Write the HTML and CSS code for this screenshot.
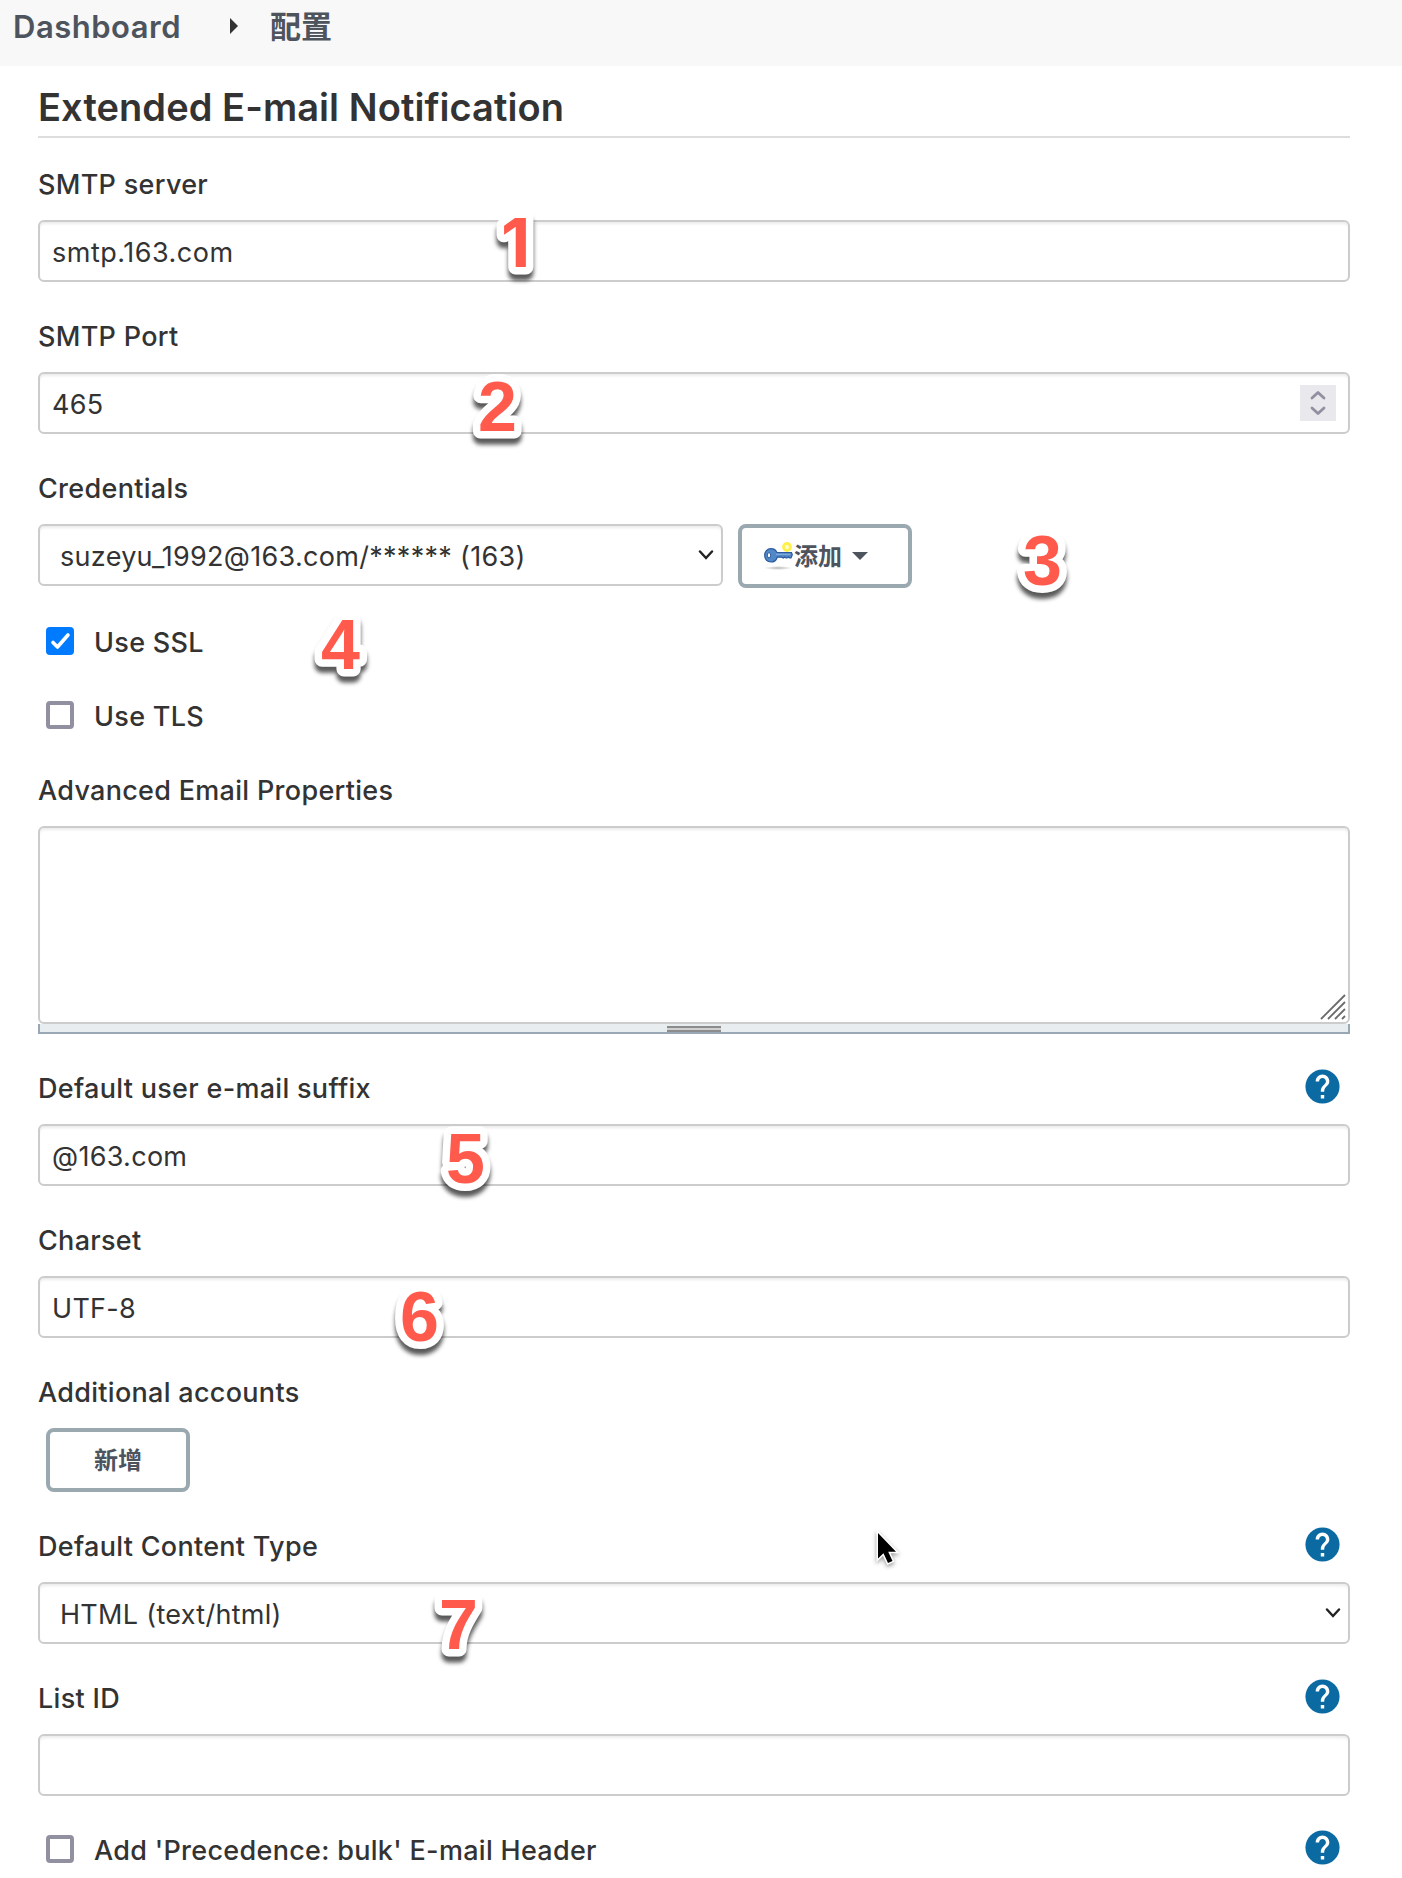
FILE: index.html
```html
<!DOCTYPE html>
<html lang="zh-CN">
<head>
<meta charset="utf-8">
<title>配置</title>
<link rel="stylesheet" href="styles.css">
</head>
<body>
<svg class="defs" width="0" height="0">
  <symbol id="help" viewBox="0 0 24 24"><path fill="#0b6aa2" d="M12 2C6.480 2 2 6.480 2 12s4.480 10 10 10 10-4.480 10-10S17.520 2 12 2z"/><path fill="#fff" d="M13 19h-2v-2h2v2zm2.070-7.750l-.9.920C13.450 12.900 13 13.500 13 15h-2v-.5c0-1.100.45-2.100 1.170-2.830l1.240-1.260c.37-.36.59-.86.59-1.410 0-1.100-.9-2-2-2s-2 .9-2 2H8c0-2.210 1.790-4 4-4s4 1.790 4 4c0 .88-.36 1.680-.93 2.250z"/></symbol>
  <symbol id="chevron" viewBox="0 0 16 10"><path d="M2 1.500 8 8l6-6.500" fill="none" stroke="#222" stroke-width="2.400" stroke-linecap="round"/></symbol>
</svg>
<header class="breadcrumbs">
  <a class="crumb crumb-home">Dashboard</a>
  <svg class="crumb-arrow" width="8" height="16" viewBox="0 0 8 16"><path d="M0 0l8 8-8 8z" fill="#333"/></svg>
  <a class="crumb">配置</a>
</header>
<main class="form">
  <h1 class="title">Extended E-mail Notification</h1>

  <section class="field">
    <div class="label"><span>SMTP server</span></div>
    <div class="control"><span class="host">smtp.163.com</span></div>
  </section>

  <section class="field">
    <div class="label"><span>SMTP Port</span></div>
    <div class="control"><span>465</span>
      <svg class="spinner" width="36" height="36" viewBox="0 0 36 36"><path fill="#e8e8ed" d="M0 0h36v36H0z"/><path d="M12 13l6-5.500 6 5.500M12 23l6 5.500 6-5.500" fill="none" stroke="#9190a0" stroke-width="2.800" stroke-linecap="round" stroke-linejoin="round"/></svg>
    </div>
  </section>

  <section class="field">
    <div class="label"><span>Credentials</span></div>
    <div class="credentials">
      <div class="control select"><span>suzeyu_1992@163.com/****** (163)</span><svg class="chevron" width="16" height="10"><use href="#chevron"/></svg></div>
      <button class="button button-add">
        <svg class="key" width="32" height="32" viewBox="0 0 32 32">
          <defs><radialGradient id="shade"><stop offset="0" stop-color="#000" stop-opacity=".28"/><stop offset="1" stop-color="#000" stop-opacity="0"/></radialGradient></defs>
          <ellipse cx="16" cy="28" rx="14" ry="2" fill="url(#shade)"/>
          <circle cx="25" cy="7" r="3.400" fill="#fffde0" stroke="#fff04a" stroke-width="3"/>
          <path d="M9 8.700c3 0 5 1.500 6 4h14.500l.8 2-1.300 3.300h-1.500l-1-1-1.500 1h-1l-1.200-1-1.500 1-1.500-.8H15.300c-1 3-3.300 4.800-6.300 4.800-4 0-6.300-3-6.300-6.600S5 8.700 9 8.700z" fill="#5288c8" stroke="#2b5b9e" stroke-width="1.200"/>
          <path d="M14 14.200h14.500" stroke="#93b9e6" stroke-width="1"/>
          <ellipse cx="7" cy="15.300" rx="1.600" ry="2.700" fill="#fff" stroke="#2b5b9e"/>
        </svg><span>添加</span>
        <svg class="caret" width="16" height="8" viewBox="0 0 16 8"><path d="M0 0h16L8 8z" fill="#4d545d"/></svg>
      </button>
    </div>
  </section>

  <section class="check"><span class="box checked"><svg width="28" height="28" viewBox="0 0 28 28"><path d="M7 15.500l4.500 4.500L22 8" fill="none" stroke="#fff" stroke-width="3.600" stroke-linecap="round" stroke-linejoin="round"/></svg></span><span>Use SSL</span></section>
  <section class="check"><span class="box"></span><span>Use TLS</span></section>

  <section class="field">
    <div class="label"><span>Advanced Email Properties</span></div>
    <div class="control area"><svg width="26" height="26" viewBox="0 0 26 26"><path d="M1 25 25 1M8 25 25 8M15 25l10-10M22 25l3-3" stroke="#6b6b6b" stroke-width="1.800" fill="none"/></svg></div>
    <div class="handle"><span class="grip"></span></div>
  </section>

  <section class="field">
    <div class="label"><span>Default user e-mail suffix</span><svg class="help"><use href="#help"/></svg></div>
    <div class="control"><span>@163.com</span></div>
  </section>

  <section class="field">
    <div class="label"><span>Charset</span></div>
    <div class="control"><span>UTF-8</span></div>
  </section>

  <section class="field">
    <div class="label"><span>Additional accounts</span></div>
    <button class="button button-new"><span>新增</span></button>
  </section>

  <section class="field">
    <div class="label"><span>Default Content Type</span><svg class="help"><use href="#help"/></svg></div>
    <div class="control select"><span>HTML (text/html)</span><svg class="chevron" width="16" height="10"><use href="#chevron"/></svg></div>
  </section>

  <section class="field">
    <div class="label"><span>List ID</span><svg class="help"><use href="#help"/></svg></div>
    <div class="control"></div>
  </section>

  <section class="check check-last"><span class="box"></span><span>Add 'Precedence: bulk' E-mail Header</span><svg class="help"><use href="#help"/></svg></section>
</main>

<svg class="marks" width="1402" height="1878">
  <g class="digits">
    <text class="one" x="501" y="267">1</text>
    <text x="478" y="431">2</text>
    <text x="1023" y="585">3</text>
    <text x="321" y="669">4</text>
    <text x="446" y="1183">5</text>
    <text x="400" y="1341">6</text>
    <text x="439" y="1649">7</text>
  </g>
  <path class="cursor" d="M878 1533v25.500l5.500-5.200 4.500 9.700 4.500-2-4.300-9.300h7.800z"/>
</svg>
</body>
</html>
```
FILE: styles.css
```css
* { box-sizing: border-box; }
body {
  margin: 0;
  min-height: 1878px;
  position: relative;
  background: #fff;
  color: #333;
  font: 400 27px/32px Inter, "Noto Sans CJK SC", sans-serif;
  letter-spacing: .3px;
}
.defs { position: absolute; }
.breadcrumbs {
  height: 66px;
  padding: 7px 0 0 13px;
  display: flex;
  align-items: flex-start;
  background: #f8f8f8;
}
.crumb { color: #4d545d; font-weight: 600; font-size: 31px; line-height: 40px; letter-spacing: 0; }
.crumb-home { letter-spacing: .5px; }
.crumb-arrow { margin: 11px 32px 0 49px; }
.form { padding: 18px 52px 0 38px; }
.title {
  margin: 0 0 30px;
  padding-bottom: 6px;
  border-bottom: 2px solid #ddd;
  font-size: 38px;
  line-height: 46px;
  font-weight: 600;
  letter-spacing: .07px;
}
.field { margin-bottom: 38px; }
.label {
  height: 32px;
  margin-bottom: 20px;
  display: flex;
  justify-content: space-between;
  font-weight: 500;
}
.label span, .check span:last-of-type { padding-top: 1px; }
.help { width: 41px; height: 41px; margin: -6px 7px 0 0; flex: none; }
.control {
  height: 62px;
  padding: 0 12px;
  display: flex;
  align-items: center;
  justify-content: space-between;
  border: 2px solid #ccc;
  border-radius: 6px;
  box-shadow: inset 0 3px 3px -1px rgba(0, 0, 0, .08);
}
.control span { padding-top: 3px; }
.host { letter-spacing: .5px; }
.select { padding: 0 7px 0 20px; }
.credentials { height: 62px; display: flex; gap: 15px; }
.credentials .control { width: 685px; }
.button {
  height: 64px;
  padding: 0;
  display: flex;
  align-items: center;
  border: 4px solid #9aa8b0;
  border-radius: 8px;
  background: #fff;
  color: #4d545d;
  font: 600 24px/32px Inter, "Noto Sans CJK SC", sans-serif;
}
.button span { padding-top: 2px; }
.button-add { width: 174px; padding-left: 20px; }
.caret { margin-left: 10px; }
.button-new { width: 144px; margin-left: 8px; justify-content: center; }
.check { height: 32px; margin: 40px 0 42px 8px; display: flex; font-weight: 500; }
.check + .check { margin-top: 0; }
.check-last { margin: 0 0 0 8px; }
.check .help { margin: -7px 7px 0 auto; }
.box {
  width: 28px;
  height: 28px;
  margin: 1px 20px 0 0;
  border: 4px solid #9190a0;
  border-radius: 4px;
}
.checked { border: 0; background: #007aff; }
.checked svg { display: block; }
.area { height: 198px; align-items: flex-end; justify-content: flex-end; padding: 0 2px 2px; }
.handle {
  height: 10px;
  padding-top: 2px;
  display: flex;
  justify-content: center;
  border: 2px solid #9aa8b5;
  border-top: 0;
  background: #e8edf0;
}
.grip { width: 54px; height: 6px; border: solid #8c8c8c; border-width: 2px 0; background: #d0d0d0; }
.marks { position: absolute; left: 0; top: 0; pointer-events: none; }
.digits {
  fill: #ff5a4c;
  stroke: #fff;
  stroke-width: 15px;
  stroke-linejoin: round;
  paint-order: stroke;
  letter-spacing: 0;
  font: 700 70px "Liberation Sans", sans-serif;
  filter: drop-shadow(0 6px 2px rgba(0, 0, 0, .65));
}
.one { font: 700 68px Inter, sans-serif; }
.cursor { stroke: #fff; stroke-width: 3px; paint-order: stroke; filter: drop-shadow(0 2px 2px rgba(0, 0, 0, .4)); }
```
